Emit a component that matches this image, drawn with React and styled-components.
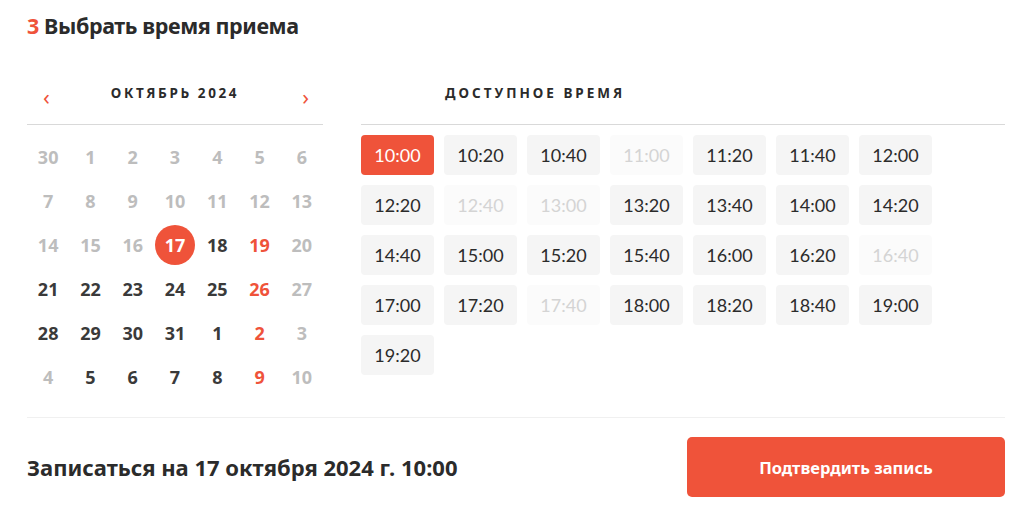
import React, { useState } from "react";
import styled, { createGlobalStyle } from "styled-components";

const RED = "#ef533a";

const GlobalStyle = createGlobalStyle`
  body {
    margin: 0;
    background: #fff;
    font-family: "Noto Sans", "Open Sans", sans-serif;
    color: #333;
  }
`;

const weeks = [
  [[30, "off"], [1, "off"], [2, "off"], [3, "off"], [4, "off"], [5, "off"], [6, "off"]],
  [[7, "off"], [8, "off"], [9, "off"], [10, "off"], [11, "off"], [12, "off"], [13, "off"]],
  [[14, "off"], [15, "off"], [16, "off"], [17, "on"], [18, "on"], [19, "red"], [20, "off"]],
  [[21, "on"], [22, "on"], [23, "on"], [24, "on"], [25, "on"], [26, "red"], [27, "off"]],
  [[28, "on"], [29, "on"], [30, "on"], [31, "on"], [1, "on"], [2, "red"], [3, "off"]],
  [[4, "off"], [5, "on"], [6, "on"], [7, "on"], [8, "on"], [9, "red"], [10, "off"]],
];

const times = [
  "10:00", "10:20", "10:40", "11:00", "11:20", "11:40", "12:00",
  "12:20", "12:40", "13:00", "13:20", "13:40", "14:00", "14:20",
  "14:40", "15:00", "15:20", "15:40", "16:00", "16:20", "16:40",
  "17:00", "17:20", "17:40", "18:00", "18:20", "18:40", "19:00",
  "19:20",
];
const busy = ["11:00", "12:40", "13:00", "16:40", "17:40"];

const App = () => {
  const [day, setDay] = useState(17);
  const [time, setTime] = useState("10:00");

  return (
    <Page>
      <GlobalStyle />
      <Title>
        <span>3</span> Выбрать время приема
      </Title>

      <Columns>
        <Calendar>
          <MonthBar>
            <Arrow>‹</Arrow>
            <Caption $spacing="2.6px">Октябрь 2024</Caption>
            <Arrow>›</Arrow>
          </MonthBar>
          <Days>
            {weeks.flat().map(([d, kind], i) => (
              <Day
                key={i}
                $kind={kind}
                $active={kind === "on" && d === day && i > 6 && i < 28}
                onClick={() => kind === "on" && setDay(d)}
              >
                {d}
              </Day>
            ))}
          </Days>
        </Calendar>

        <Slots>
          <SlotsBar>
            <Caption>Доступное время</Caption>
          </SlotsBar>
          <SlotGrid>
            {times.map((t) => (
              <Slot
                key={t}
                $busy={busy.includes(t)}
                $active={t === time}
                onClick={() => !busy.includes(t) && setTime(t)}
              >
                {t}
              </Slot>
            ))}
          </SlotGrid>
        </Slots>
      </Columns>

      <Footer>
        <Summary>Записаться на {day} октября 2024 г. {time}</Summary>
        <Confirm>Подтвердить запись</Confirm>
      </Footer>
    </Page>
  );
};

const Page = styled.div`
  width: 978px;
  padding: 10px 0 0 27px;
`;

const Title = styled.h2`
  margin: 0;
  font-size: 21.5px;
  line-height: 32px;
  font-weight: 700;
  color: #2b2b2b;
  letter-spacing: -0.4px;
  span {
    color: ${RED};
  }
`;

const Columns = styled.div`
  display: flex;
  gap: 38px;
  margin-top: 37px;
`;

const Calendar = styled.div`
  width: 296px;
`;

const MonthBar = styled.div`
  display: flex;
  align-items: center;
  justify-content: space-between;
  height: 46px;
  box-sizing: border-box;
  padding: 0 14px 17px;
  border-bottom: 1px solid #d9d9d9;
  margin-bottom: 10px;
`;

const Caption = styled.div`
  font-size: 13.5px;
  font-weight: 700;
  letter-spacing: ${(p) => p.$spacing || "3px"};
  text-transform: uppercase;
  color: #2b2b2b;
`;

const Arrow = styled.button`
  border: 0;
  background: none;
  padding: 0;
  color: ${RED};
  font-size: 22px;
  line-height: 1;
  font-family: "Noto Sans", sans-serif;
  cursor: pointer;
  margin-top: 6px;
  margin-left: 2px;
`;

const Days = styled.div`
  display: grid;
  grid-template-columns: repeat(7, 1fr);
  grid-auto-rows: 44px;
  align-items: center;
  justify-items: center;
`;

const dayColor = {
  off: "#bdbdbd",
  on: "#3a3a3a",
  red: RED,
};

const Day = styled.div`
  width: 40px;
  height: 40px;
  border-radius: 50%;
  display: flex;
  align-items: center;
  justify-content: center;
  font-size: 18px;
  font-weight: 700;
  color: ${(p) => (p.$active ? "#fff" : dayColor[p.$kind])};
  background: ${(p) => (p.$active ? RED : "transparent")};
  cursor: ${(p) => (p.$kind === "on" ? "pointer" : "default")};
`;

const Slots = styled.div`
  flex: 1;
`;

const SlotsBar = styled.div`
  display: flex;
  align-items: center;
  height: 46px;
  box-sizing: border-box;
  padding: 0 0 17px 84px;
  border-bottom: 1px solid #d9d9d9;
  margin-bottom: 10px;
`;

const SlotGrid = styled.div`
  display: grid;
  grid-template-columns: repeat(7, 73px);
  grid-auto-rows: 40px;
  gap: 10px;
`;

const Slot = styled.button`
  border: 0;
  border-radius: 4px;
  font-family: "Lato", "Noto Sans", sans-serif;
  font-size: 18px;
  padding: 0;
  background: ${(p) => (p.$active ? RED : p.$busy ? "#fbfbfb" : "#f5f5f5")};
  color: ${(p) => (p.$active ? "#fff" : p.$busy ? "#d4d4d4" : "#2b2b2b")};
  cursor: ${(p) => (p.$busy ? "default" : "pointer")};
`;

const Footer = styled.div`
  display: flex;
  align-items: center;
  justify-content: space-between;
  margin-top: 18px;
  padding-top: 19px;
  border-top: 1px solid #f0f0f0;
`;

const Summary = styled.div`
  font-size: 22px;
  font-weight: 700;
  color: #2b2b2b;
  letter-spacing: 0;
`;

const Confirm = styled.button`
  width: 318px;
  height: 60px;
  border: 0;
  border-radius: 5px;
  background: ${RED};
  color: #fff;
  font-family: "Noto Sans", sans-serif;
  font-size: 16.5px;
  font-weight: 700;
  cursor: pointer;
`;

export default App;
